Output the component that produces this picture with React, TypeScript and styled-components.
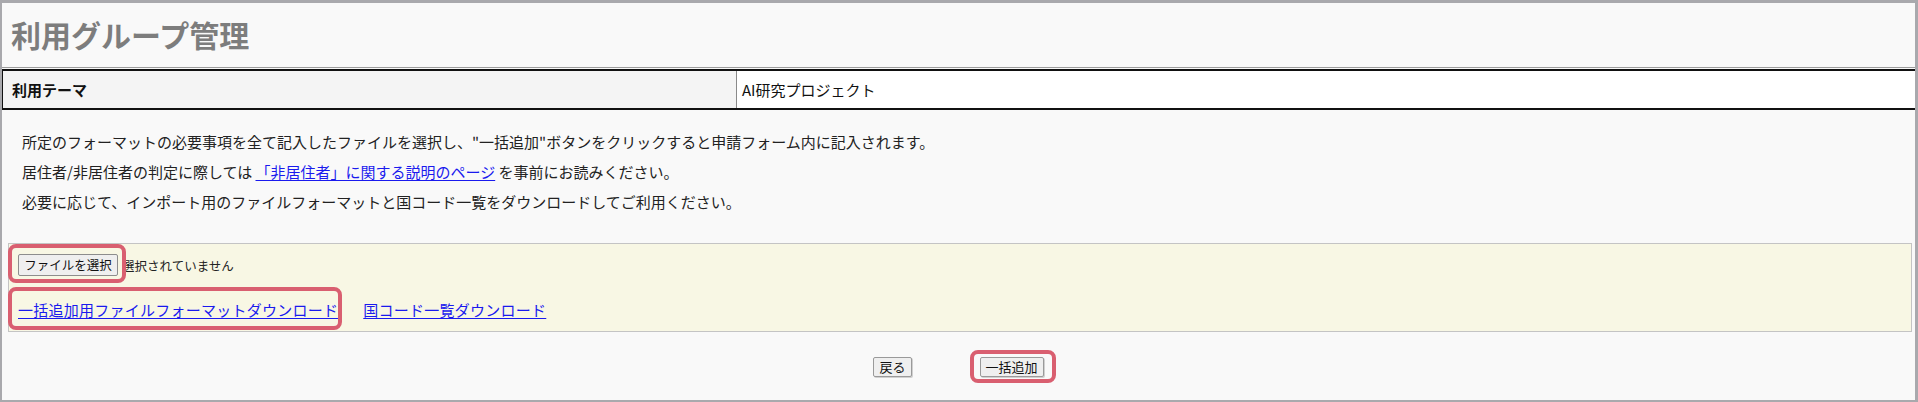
import React from "react";
import styled, { createGlobalStyle } from "styled-components";

const GlobalStyle = createGlobalStyle`
  html, body { margin: 0; padding: 0; background: #f9f9f9; }
  body {
    font-family: "Noto Sans CJK JP", "Noto Sans", "Liberation Sans", sans-serif;
    color: #222;
  }
  * { box-sizing: border-box; }
`;

const Frame = styled.div`
  width: 100%;
  height: 402px;
  border-style: solid;
  border-color: #a9a9ad;
  border-width: 3px 3px 2px 2px;
  background: #f9f9f9;
  display: flex;
  flex-direction: column;
`;

const Header = styled.header`
  height: 65px;
  border-bottom: 1px solid #9c9c9c;
  display: flex;
  align-items: center;
  padding: 0 0 3px 9px;
`;

const Title = styled.h1`
  margin: 0;
  font-size: 30px;
  line-height: 36px;
  font-weight: 700;
  color: #7d7d7d;
`;

const InfoTable = styled.div`
  margin-top: 1px;
  height: 41px;
  display: grid;
  grid-template-columns: 733px 1fr;
  border-top: 2px solid #111;
  border-bottom: 2px solid #111;
  border-left: 1px solid #111;
`;

const Cell = styled.div<{ $head?: boolean }>`
  display: flex;
  align-items: center;
  font-size: 15px;
  color: #111;
  font-weight: ${(p) => (p.$head ? 700 : 400)};
  background: ${(p) => (p.$head ? "#f4f4f4" : "#ffffff")};
  padding-left: ${(p) => (p.$head ? "9px" : "5px")};
  border-left: ${(p) => (p.$head ? "none" : "1px solid #8a8a8a")};
`;

const Notes = styled.div`
  padding: 17px 0 0 20px;
`;

const NoteLine = styled.p`
  margin: 0;
  font-size: 15px;
  line-height: 30px;
  color: #222;
  white-space: nowrap;
`;

const TextLink = styled.a`
  color: #1a1aee;
  text-decoration: underline;
  text-underline-offset: 2px;
  cursor: pointer;
`;

const UploadBox = styled.div`
  margin: 26px 3px 0 6px;
  height: 89px;
  background: #f8f7e4;
  border: 1px solid #c4c4c4;
  padding: 10px 8px 0 9px;
  display: flex;
  flex-direction: column;
  gap: 24px;
`;

const FileRow = styled.div`
  display: flex;
  align-items: center;
  height: 22px;
`;

const Highlight = styled.span<{ $inset: string }>`
  position: relative;
  display: inline-flex;
  align-items: center;
  &::after {
    content: "";
    position: absolute;
    inset: ${(p) => p.$inset};
    border: 4px solid #d95f70;
    border-radius: 8px;
    pointer-events: none;
  }
`;

const FileButton = styled.button`
  height: 22px;
  width: 100px;
  padding: 0;
  font-family: inherit;
  font-size: 12.5px;
  color: #111;
  background: #efefef;
  border: 1px solid #8d8d8d;
  border-radius: 2px;
  line-height: 20px;
`;

const FileStatus = styled.span`
  margin-left: 4px;
  font-size: 12.5px;
  color: #222;
`;

const LinkRow = styled.div`
  display: flex;
  align-items: center;
  gap: 25px;
  height: 20px;
  font-size: 15px;
  line-height: 20px;
  letter-spacing: 0.25px;
`;

const Actions = styled.div`
  margin-top: 25px;
  display: flex;
  justify-content: center;
  gap: 68px;
`;

const ActionButton = styled.button`
  height: 20px;
  padding: 0 5px;
  font-family: inherit;
  font-size: 13px;
  line-height: 18px;
  color: #111;
  background: #efefef;
  border: 1px solid #9a9a9a;
  border-radius: 2px;
  box-shadow: 1px 1px 0 #d0d0d0;
`;

export default function App() {
  return (
    <>
      <GlobalStyle />
      <Frame>
        <Header>
          <Title>利用グループ管理</Title>
        </Header>
        <InfoTable>
          <Cell $head>利用テーマ</Cell>
          <Cell>AI研究プロジェクト</Cell>
        </InfoTable>
        <Notes>
          <NoteLine>
            所定のフォーマットの必要事項を全て記入したファイルを選択し、"一括追加"ボタンをクリックすると申請フォーム内に記入されます。
          </NoteLine>
          <NoteLine>
            居住者/非居住者の判定に際しては <TextLink>「非居住者」に関する説明のページ</TextLink> を事前にお読みください。
          </NoteLine>
          <NoteLine>
            必要に応じて、インポート用のファイルフォーマットと国コード一覧をダウンロードしてご利用ください。
          </NoteLine>
        </Notes>
        <UploadBox>
          <FileRow>
            <Highlight $inset="-10px -8px -7px -10px">
              <FileButton type="button">ファイルを選択</FileButton>
            </Highlight>
            <FileStatus>選択されていません</FileStatus>
          </FileRow>
          <LinkRow>
            <Highlight $inset="-13px -4px -10px -10px">
              <TextLink>一括追加用ファイルフォーマットダウンロード</TextLink>
            </Highlight>
            <TextLink>国コード一覧ダウンロード</TextLink>
          </LinkRow>
        </UploadBox>
        <Actions>
          <ActionButton type="button">戻る</ActionButton>
          <Highlight $inset="-7px -12px -6px -10px">
            <ActionButton type="button">一括追加</ActionButton>
          </Highlight>
        </Actions>
      </Frame>
    </>
  );
}
